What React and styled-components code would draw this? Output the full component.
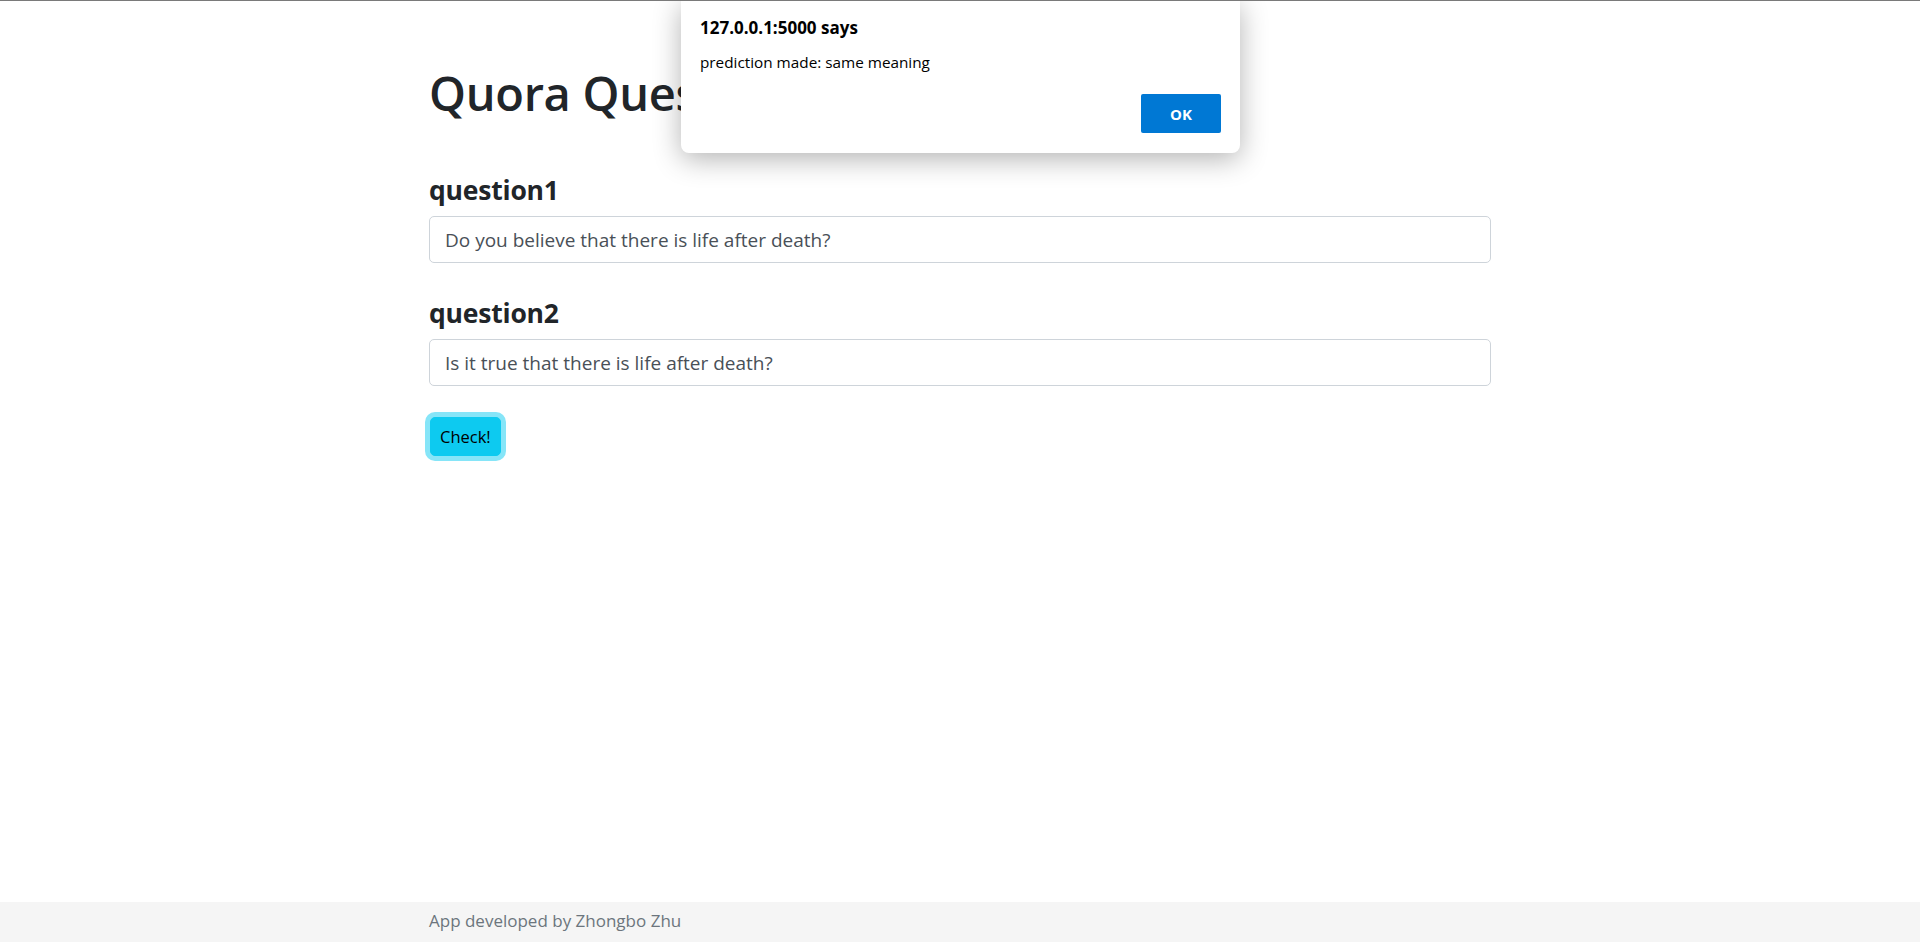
import React from 'react';
import styled, { createGlobalStyle } from 'styled-components';

const GlobalStyle = createGlobalStyle`
  html, body {
    margin: 0;
    padding: 0;
    background: #fff;
  }
  body {
    border-top: 1px solid #7a7a7a;
    font-family: "Open Sans", "Noto Sans", sans-serif;
    color: #212529;
  }
`;

const Page = styled.div`
  min-height: 941px;
  display: flex;
  flex-direction: column;
  position: relative;
`;

const Main = styled.main`
  flex: 1;
`;

const Container = styled.div`
  width: 1062px;
  margin: 0 auto;
`;

const Title = styled.h1`
  margin: 62px 0 52px;
  font-size: 47px;
  font-weight: 600;
  line-height: 60px;
  letter-spacing: -0.3px;
  white-space: nowrap;
`;

const Group = styled.div`
  margin-bottom: ${p => p.last ? '31px' : '35px'};
`;

const Label = styled.label`
  display: block;
  margin-bottom: 11px;
  font-size: 26.5px;
  font-weight: 700;
  line-height: 30px;
  letter-spacing: -0.2px;
`;

const Input = styled.input`
  display: block;
  box-sizing: border-box;
  width: 100%;
  height: 47px;
  padding: 0 15px;
  border: 1px solid #ced4da;
  border-radius: 5px;
  font-family: inherit;
  font-size: 19px;
  color: #495057;
  background: #fff;
  outline: none;
`;

const Button = styled.button`
  height: 39px;
  padding: 0 9px;
  margin-left: 1px;
  border: 1px solid #0dcaf0;
  border-radius: 5px;
  background: #0dcaf0;
  color: #000;
  font-family: inherit;
  font-size: 16.5px;
  box-shadow: 0 0 0 5px #86e5f8;
  cursor: pointer;
`;

const Footer = styled.footer`
  height: 40px;
  box-sizing: border-box;
  padding-bottom: 4px;
  background: #f5f5f5;
  display: flex;
  align-items: center;
`;

const FooterText = styled.span`
  display: block;
  width: 1062px;
  margin: 0 auto;
  font-size: 17px;
  color: #6c757d;
`;

const Dialog = styled.div`
  position: absolute;
  top: -1px;
  left: 681px;
  width: 559px;
  height: 153px;
  box-sizing: border-box;
  padding: 0 19px 20px 19px;
  background: #fff;
  border-radius: 0 0 8px 8px;
  box-shadow: 0 6px 28px rgba(0, 0, 0, 0.3);
  display: flex;
  flex-direction: column;
  font-family: "Open Sans", "Noto Sans", sans-serif;
  color: #000;
`;

const DialogTitle = styled.div`
  margin-top: 17px;
  font-size: 17px;
  font-weight: 700;
  line-height: 22px;
`;

const DialogMessage = styled.div`
  margin-top: 13px;
  font-size: 15.3px;
  line-height: 20px;
`;

const DialogActions = styled.div`
  margin-top: auto;
  display: flex;
  justify-content: flex-end;
`;

const OkButton = styled.button`
  width: 80px;
  height: 39px;
  border: none;
  border-radius: 2px;
  background: #0078d4;
  color: #fff;
  font-family: inherit;
  font-size: 15px;
  font-weight: 700;
`;

export default function App() {
  return (
    <>
      <GlobalStyle />
      <Page>
        <Main>
          <Container>
            <Title>Quora Question Pairs</Title>
            <Group>
              <Label htmlFor="q1">question1</Label>
              <Input id="q1" defaultValue="Do you believe that there is life after death?" />
            </Group>
            <Group last>
              <Label htmlFor="q2">question2</Label>
              <Input id="q2" defaultValue="Is it true that there is life after death?" />
            </Group>
            <Button type="button">Check!</Button>
          </Container>
        </Main>
        <Footer>
          <FooterText>App developed by Zhongbo Zhu</FooterText>
        </Footer>
        <Dialog>
          <DialogTitle>127.0.0.1:5000 says</DialogTitle>
          <DialogMessage>prediction made: same meaning</DialogMessage>
          <DialogActions>
            <OkButton type="button">OK</OkButton>
          </DialogActions>
        </Dialog>
      </Page>
    </>
  );
}
